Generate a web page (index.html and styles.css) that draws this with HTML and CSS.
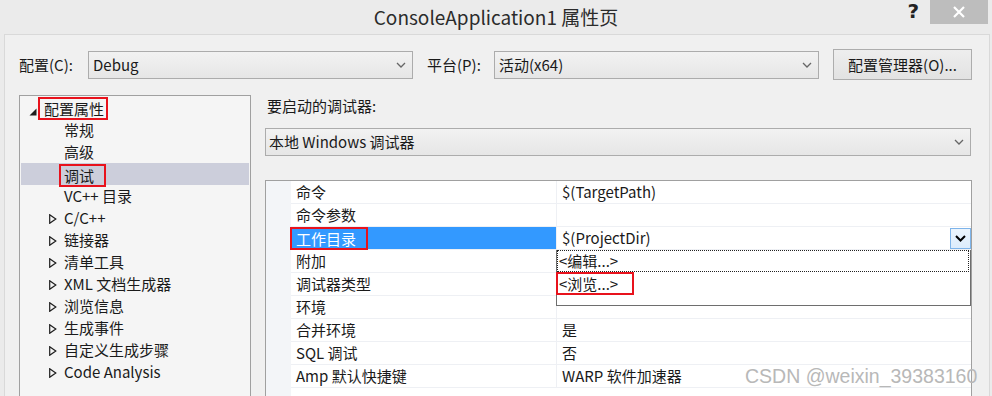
FILE: index.html
```html
<!DOCTYPE html>
<html lang="zh-CN">
<head>
<meta charset="utf-8">
<title>ConsoleApplication1 属性页</title>
<link rel="stylesheet" href="styles.css">
</head>
<body>
<div class="titlebar">
  <div></div>
  <div class="title">ConsoleApplication1 属性页</div>
  <div class="winctl">
    <span class="help">?</span>
    <span class="close"><svg width="14" height="12" viewBox="0 0 14 12"><path d="M2 1 L12 11 M12 1 L2 11" stroke="#fff" stroke-width="2.2"/></svg></span>
  </div>
</div>
<div class="dialog">
  <div class="toprow">
    <span class="lbl lbl1">配置(C):</span>
    <div class="select sel-sm"><span>Debug</span><svg class="chev" width="10" height="6" viewBox="0 0 10 6"><path d="M1 1 L5 5 L9 1" fill="none" stroke="#666" stroke-width="1.3"/></svg></div>
    <span class="lbl lbl2">平台(P):</span>
    <div class="select sel-sm"><span>活动(x64)</span><svg class="chev" width="10" height="6" viewBox="0 0 10 6"><path d="M1 1 L5 5 L9 1" fill="none" stroke="#666" stroke-width="1.3"/></svg></div>
    <button class="btn">配置管理器(O)...</button>
  </div>
  <div class="main">
    <div class="tree">
      <div class="node lv0"><span class="tog"><svg width="8" height="8" viewBox="0 0 8 8"><polygon points="7.5,0.5 7.5,7.5 0.5,7.5" fill="#1e1e1e"/></svg></span><span class="mark mk-root">配置属性</span></div>
      <div class="node lv1"><span class="tog"></span>常规</div>
      <div class="node lv1"><span class="tog"></span>高级</div>
      <div class="node lv1 sel"><span class="tog"></span><span class="mark mk-dbg">调试</span></div>
      <div class="node lv1"><span class="tog"></span>VC++ 目录</div>
      <div class="node lv1"><span class="tog"><svg class="tri" width="8" height="10" viewBox="0 0 8 10"><polygon points="0.7,0.7 6.8,5 0.7,9.3" fill="none" stroke="#1e1e1e" stroke-width="1.2"/></svg></span>C/C++</div>
      <div class="node lv1"><span class="tog"><svg class="tri" width="8" height="10" viewBox="0 0 8 10"><polygon points="0.7,0.7 6.8,5 0.7,9.3" fill="none" stroke="#1e1e1e" stroke-width="1.2"/></svg></span>链接器</div>
      <div class="node lv1"><span class="tog"><svg class="tri" width="8" height="10" viewBox="0 0 8 10"><polygon points="0.7,0.7 6.8,5 0.7,9.3" fill="none" stroke="#1e1e1e" stroke-width="1.2"/></svg></span>清单工具</div>
      <div class="node lv1"><span class="tog"><svg class="tri" width="8" height="10" viewBox="0 0 8 10"><polygon points="0.7,0.7 6.8,5 0.7,9.3" fill="none" stroke="#1e1e1e" stroke-width="1.2"/></svg></span>XML 文档生成器</div>
      <div class="node lv1"><span class="tog"><svg class="tri" width="8" height="10" viewBox="0 0 8 10"><polygon points="0.7,0.7 6.8,5 0.7,9.3" fill="none" stroke="#1e1e1e" stroke-width="1.2"/></svg></span>浏览信息</div>
      <div class="node lv1"><span class="tog"><svg class="tri" width="8" height="10" viewBox="0 0 8 10"><polygon points="0.7,0.7 6.8,5 0.7,9.3" fill="none" stroke="#1e1e1e" stroke-width="1.2"/></svg></span>生成事件</div>
      <div class="node lv1"><span class="tog"><svg class="tri" width="8" height="10" viewBox="0 0 8 10"><polygon points="0.7,0.7 6.8,5 0.7,9.3" fill="none" stroke="#1e1e1e" stroke-width="1.2"/></svg></span>自定义生成步骤</div>
      <div class="node lv1"><span class="tog"><svg class="tri" width="8" height="10" viewBox="0 0 8 10"><polygon points="0.7,0.7 6.8,5 0.7,9.3" fill="none" stroke="#1e1e1e" stroke-width="1.2"/></svg></span>Code Analysis</div>
    </div>
    <div class="right">
      <div class="caption">要启动的调试器:</div>
      <div class="select sel-lg"><span>本地 Windows 调试器</span><svg class="chev" width="10" height="6" viewBox="0 0 10 6"><path d="M1 1 L5 5 L9 1" fill="none" stroke="#666" stroke-width="1.3"/></svg></div>
      <div class="pgrid">
        <div class="gutter"></div>
        <div class="rows">
          <div class="prow"><div class="pname">命令</div><div class="pval">$(TargetPath)</div></div>
          <div class="prow"><div class="pname">命令参数</div><div class="pval"></div></div>
          <div class="prow"><div class="pname active"><span class="mark mk-wd">工作目录</span></div><div class="pval edit"><span>$(ProjectDir)</span><span class="ddbtn"><svg width="11" height="7" viewBox="0 0 11 7"><path d="M1 1 L5.5 5.5 L10 1" fill="none" stroke="#000" stroke-width="2"/></svg></span>
            <div class="ddlist">
              <div class="dditem focus">&lt;编辑...&gt;</div>
              <div class="dditem"><span class="mark mk-br">&lt;浏览...&gt;</span></div>
            </div>
          </div></div>
          <div class="prow"><div class="pname">附加</div><div class="pval"></div></div>
          <div class="prow"><div class="pname">调试器类型</div><div class="pval"></div></div>
          <div class="prow"><div class="pname">环境</div><div class="pval"></div></div>
          <div class="prow"><div class="pname">合并环境</div><div class="pval">是</div></div>
          <div class="prow"><div class="pname">SQL 调试</div><div class="pval">否</div></div>
          <div class="prow"><div class="pname">Amp 默认快捷键</div><div class="pval">WARP 软件加速器</div></div>
        </div>
      </div>
    </div>
  </div>
</div>
<div class="watermark">CSDN @weixin_39383160</div>
</body>
</html>
```
FILE: styles.css
```css
html, body {
  margin: 0;
  padding: 0;
}
body {
  width: 992px;
  height: 396px;
  overflow: hidden;
  background: #ebebeb;
  font-family: "Noto Sans CJK SC", "Noto Sans", sans-serif;
  font-size: 15px;
  color: #1a1a1a;
  position: relative;
}
.titlebar {
  height: 34px;
  display: grid;
  grid-template-columns: 1fr auto 1fr;
  align-items: start;
}
.title {
  font-size: 19px;
  line-height: 34px;
  color: #2b2b2b;
}
.winctl {
  justify-self: end;
  display: flex;
  align-items: flex-start;
  margin-right: 4px;
}
.help {
  font-family: "DejaVu Sans", sans-serif;
  font-weight: bold;
  font-size: 20px;
  line-height: 22px;
  color: #222;
  margin-right: 11px;
}
.close {
  width: 58px;
  height: 24px;
  background: #bdbdbd;
  display: flex;
  align-items: center;
  justify-content: center;
}
.dialog {
  margin: 0 2px 0 4px;
  height: 362px;
  box-sizing: border-box;
  border: 1px solid #d9d9d9;
  border-bottom: none;
  background: #f0f0f0;
  padding: 14px 17px 0 14px;
}
.toprow {
  display: flex;
  align-items: center;
  height: 31px;
}
.lbl {
  line-height: 22px;
}
.lbl1 { width: 69px; }
.lbl2 { width: 67px; margin-left: 14px; }
.select {
  box-sizing: border-box;
  border: 1px solid #acacac;
  background: linear-gradient(#f2f2f2, #e6e6e6);
  display: flex;
  align-items: center;
  justify-content: space-between;
  padding: 0 6px 0 4px;
  line-height: 22px;
}
.sel-sm {
  width: 325px;
  height: 28px;
}
.sel-lg {
  width: 706px;
  height: 28px;
  margin-top: 11px;
  padding-left: 3px;
}
.chev { flex: none; }
.btn {
  margin-left: 14px;
  width: 139px;
  height: 31px;
  box-sizing: border-box;
  border: 1px solid #adadad;
  background: linear-gradient(#eeeeee, #e2e2e2);
  font-family: inherit;
  font-size: 15px;
  color: #1a1a1a;
  padding: 0;
  line-height: 22px;
}
.main {
  display: flex;
  gap: 14px;
  margin-top: 15px;
}
.tree {
  width: 232px;
  height: 320px;
  box-sizing: border-box;
  border: 1px solid #a0a0a0;
  background: #f5f5f5;
  padding: 1px 0 0 0;
}
.node {
  height: 22px;
  line-height: 22px;
  white-space: nowrap;
}
.node.lv0 { padding-left: 9px; }
.node.lv1 { padding-left: 29px; }
.node.sel { background: #cccedb; margin: 0 1px; padding-left: 28px; }
.tog {
  display: inline-block;
  width: 15px;
  height: 22px;
  vertical-align: top;
  position: relative;
}
.tog svg {
  display: block;
}
.lv0 .tog svg { margin-top: 11px; }
.tri { margin-top: 7px; }
.mark {
  display: inline-block;
  box-sizing: border-box;
  box-shadow: inset 0 0 0 2px #e8121c;
  line-height: 23px;
  height: 23px;
  vertical-align: top;
}
.mk-root { padding: 0 4px 0 6px; margin-left: -6px; }
.mk-dbg { padding: 0 12px 0 5px; margin-left: -5px; margin-top: 1px; }
.right {
  width: 707px;
}
.caption {
  line-height: 22px;
  padding-left: 2px;
}
.pgrid {
  margin-top: 24px;
  height: 240px;
  box-sizing: border-box;
  border: 1px solid #a0a0a0;
  border-bottom: none;
  background: #fff;
  display: flex;
}
.gutter {
  width: 25px;
  flex: none;
  background: #f3f5f8;
}
.rows { flex: 1; }
.prow {
  display: grid;
  grid-template-columns: 266px 1fr;
  height: 23px;
  box-sizing: border-box;
  border-bottom: 1px solid #eef0f4;
}
.pname, .pval {
  line-height: 22px;
  height: 22px;
  white-space: nowrap;
}
.pname {
  padding-left: 5px;
  border-right: 1px solid #eef0f4;
}
.pname.active {
  background: #3399ff;
  color: #fff;
}
.mk-wd { padding: 0 12px 0 6px; margin-left: -6px; }
.pval {
  padding-left: 5px;
  position: relative;
}
.pval.edit {
  display: flex;
  justify-content: space-between;
  padding-right: 0;
}
.ddbtn {
  width: 21px;
  height: 21px;
  margin-top: 1px;
  box-sizing: border-box;
  border: 1px solid #7eb4ea;
  background: linear-gradient(#ecf4fc, #dcecfc);
  display: flex;
  align-items: center;
  justify-content: center;
}
.ddlist {
  position: absolute;
  top: 23px;
  left: -1px;
  width: 415px;
  height: 56px;
  box-sizing: border-box;
  border: 1px solid #6e6e6e;
  border-top: none;
  background: #fff;
  z-index: 2;
}
.dditem {
  height: 22px;
  line-height: 20px;
  box-sizing: border-box;
  padding-left: 2px;
  color: #1a1a1a;
}
.dditem.focus {
  border: 1px dotted #222;
  line-height: 20px;
  padding-left: 1px;
  margin-right: 1px;
}
.mk-br { padding: 0 16px 0 3px; margin-left: -3px; line-height: 23px; }
.watermark {
  position: absolute;
  left: 745px;
  top: 366px;
  font-family: "Liberation Sans", Arial, sans-serif;
  font-size: 19.5px;
  line-height: 20px;
  color: #b8b8b8;
  white-space: nowrap;
}
```
